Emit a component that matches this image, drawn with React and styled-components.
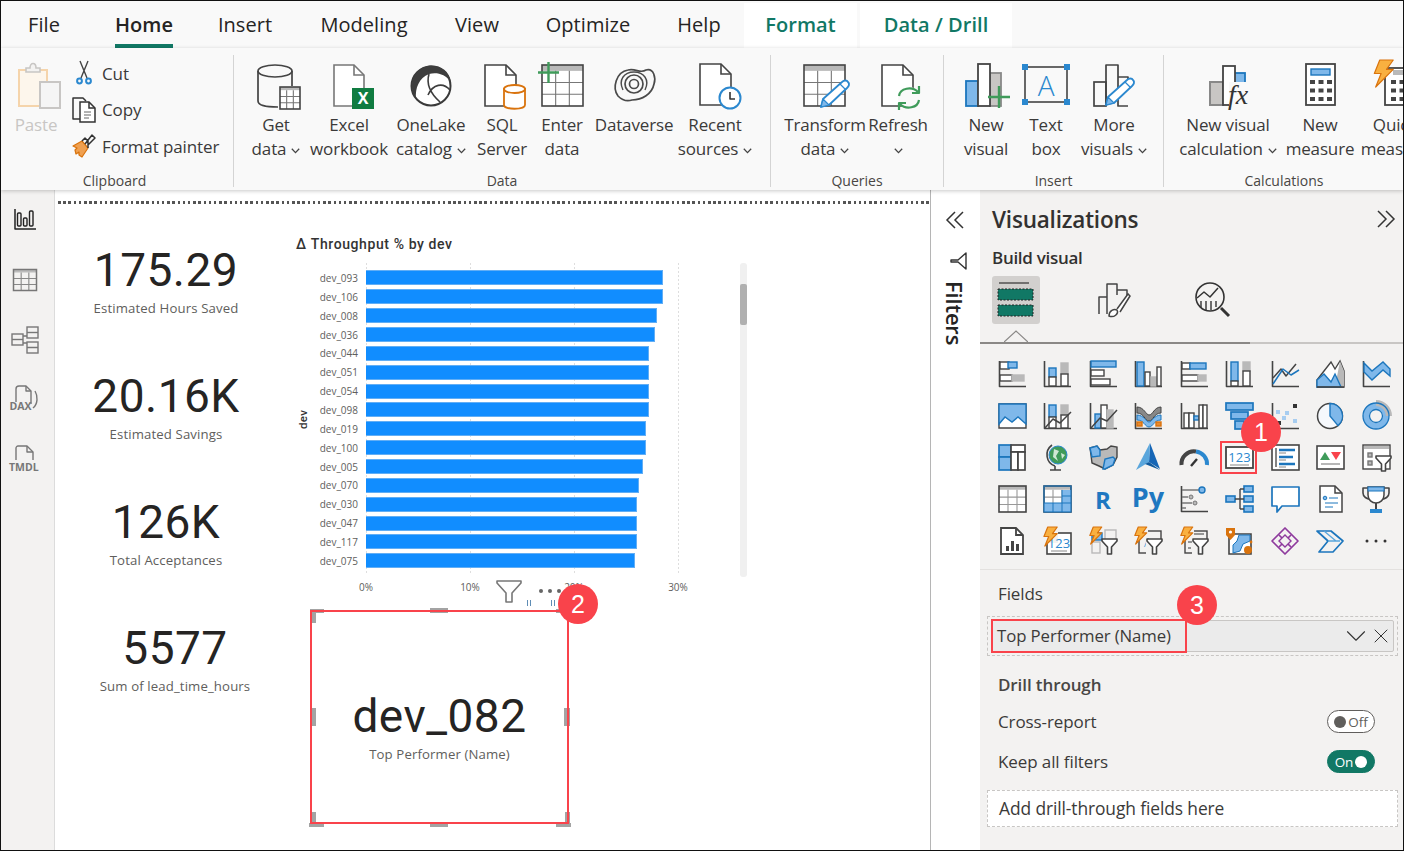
import styled, { createGlobalStyle } from "styled-components";
import { ChevronDown, X } from "lucide-react";

const D = "#444";
const B = "#1c76bd";
const L = "#7fb8ea";
const G = "#b9b9b9";
const W = "#fff";
const GREEN = "#117865";
const RED = "#f9434b";

const GlobalStyle = createGlobalStyle`
  * { box-sizing: border-box; }
  html, body { margin: 0; padding: 0; background: #fff; }
  body { font-family: "Open Sans", "Noto Sans", sans-serif; color: #3b3a39; }
`;

const Frame = styled.div`
  width: 1404px;
  height: 851px;
  border: 1px solid #111;
  display: flex;
  flex-direction: column;
  overflow: hidden;
  background: #fff;
`;

/* ---------- tabs + ribbon ---------- */
const Tabs = styled.nav`
  display: flex;
  height: 47px;
  background: #f9f9f9;
  padding-top: 2px;
`;
const Tab = styled.div`
  position: relative;
  width: ${(p) => p.$w}px;
  margin-left: ${(p) => p.$ml || 0}px;
  text-align: center;
  font-size: 20px;
  line-height: 44px;
  letter-spacing: 0.05px;
  color: ${(p) => (p.$context ? GREEN : "#252423")};
  font-weight: ${(p) => (p.$context || p.$active ? 600 : 400)};
  background: ${(p) => (p.$context ? "#fff" : "transparent")};
  ${(p) =>
    p.$active &&
    `&::after { content: ""; position: absolute; left: 28px; right: 28px; bottom: 0; height: 4px; background: ${GREEN}; }`}
`;
const Ribbon = styled.section`
  display: flex;
  height: 142px;
  padding-top: 7px;
  background: #f9f9f9;
  box-shadow: 0 1px 4px rgba(0, 0, 0, 0.22);
  position: relative;
  z-index: 2;
  overflow: hidden;
  flex: none;
`;
const Group = styled.div`
  width: ${(p) => p.$w}px;
  height: 132px;
  flex: none;
  display: flex;
  flex-direction: column;
  border-right: ${(p) => (p.$last ? "none" : "1px solid #d4d4d4")};
`;
const GroupBody = styled.div`
  display: flex;
  flex: none;
  height: 117px;
  padding-left: ${(p) => p.$pl || 0}px;
`;
const GroupLabel = styled.div`
  text-align: center;
  font-size: 14px;
  line-height: 18px;
  color: #484644;
  padding-right: ${(p) => p.$pr || 0}px;
`;
const Item = styled.div`
  width: ${(p) => p.$w}px;
  flex: none;
  display: flex;
  flex-direction: column;
  align-items: center;
  padding-top: 5px;
  font-size: 17px;
  line-height: 24px;
  letter-spacing: -0.15px;
  white-space: nowrap;
  color: ${(p) => (p.$disabled ? "#c8c6c4" : "#3b3a39")};
  & > div:first-of-type {
    margin-top: 1px;
  }
`;
const BigSvg = styled.svg`
  width: 48px;
  height: 52px;
  flex: none;
  overflow: visible;
`;
const Caret = styled.svg`
  width: 9px;
  height: 6px;
  margin-left: ${(p) => (p.$alone ? 0 : 5)}px;
  vertical-align: 1px;
`;
const SmallCol = styled.div`
  display: flex;
  flex-direction: column;
  padding-left: 12px;
`;
const SmallRow = styled.div`
  height: 36.5px;
  display: flex;
  align-items: center;
  gap: 6px;
  font-size: 17px;
  letter-spacing: -0.1px;
  white-space: nowrap;
`;
const SmallSvg = styled.svg`
  width: 24px;
  height: 26px;
  flex: none;
`;

/* ---------- body ---------- */
const Body = styled.main`
  flex: 1;
  display: flex;
  min-height: 0;
`;
const Rail = styled.aside`
  width: 54px;
  flex: none;
  background: #f3f2f1;
  border-right: 1px solid #dcdcdc;
  padding-right: 5px;
  display: flex;
  flex-direction: column;
  align-items: center;
`;
const RailCell = styled.div`
  height: 60px;
  display: flex;
  align-items: center;
  justify-content: center;
`;
const RailSvg = styled.svg`
  width: 30px;
  height: 30px;
  overflow: visible;
`;
const Canvas = styled.div`
  width: 875px;
  flex: none;
  padding-top: 11px;
`;
const DottedRule = styled.div`
  height: 3px;
  margin-left: 3px;
  background: repeating-linear-gradient(90deg, #555 0 2.5px, transparent 2.5px 5.2px);
`;
const Report = styled.div`
  display: flex;
`;
const KpiColumn = styled.div`
  width: 222px;
  flex: none;
  padding-top: 41px;
`;
const Kpi = styled.div`
  height: 126px;
  display: flex;
  flex-direction: column;
  align-items: center;
  padding-left: ${(p) => p.$shift || 0}px;
`;
const KpiValue = styled.div`
  font-family: Roboto, sans-serif;
  font-size: 46px;
  line-height: 50px;
  letter-spacing: 0.5px;
  color: #252423;
`;
const KpiLabel = styled.div`
  margin-top: 3px;
  font-size: 13.2px;
  line-height: 20px;
  color: #605e5c;
  letter-spacing: 0.12px;
`;
const ChartColumn = styled.div`
  margin-left: 19px;
  padding-top: 30px;
  width: 460px;
`;
const ChartTitle = styled.div`
  font-family: Roboto, sans-serif;
  font-weight: 500;
  font-size: 14px;
  line-height: 20px;
  letter-spacing: 0.6px;
  color: #333;
  margin-bottom: 9px;
`;
const ChartBody = styled.div`
  display: flex;
  height: 314px;
`;
const AxisTitle = styled.div`
  width: 20px;
  flex: none;
  display: flex;
  align-items: center;
  justify-content: center;
  padding-left: 6px;
  padding-top: 2px;
  writing-mode: vertical-rl;
  transform: rotate(180deg);
  font-family: Roboto, sans-serif;
  font-weight: 500;
  font-size: 11.5px;
  letter-spacing: 0.3px;
  color: #333;
`;
const BarList = styled.div`
  width: 420px;
  height: 312px;
  flex: none;
  padding-top: 5.5px;
  background-image: linear-gradient(#dedede 50%, transparent 50%), linear-gradient(#dedede 50%, transparent 50%),
    linear-gradient(#dedede 50%, transparent 50%), linear-gradient(#dedede 50%, transparent 50%);
  background-size: 1px 4px;
  background-repeat: repeat-y;
  background-position: 50px 0, 154px 0, 258px 0, 362px 0;
`;
const BarRow = styled.div`
  height: 18.87px;
  display: grid;
  grid-template-columns: 42px 1fr;
  column-gap: 8px;
  align-items: center;
`;
const BarName = styled.div`
  font-size: 10px;
  line-height: 12px;
  text-align: right;
  color: #605e5c;
  white-space: nowrap;
`;
const Bar = styled.div`
  height: 15px;
  background: #118dff;
  border: 1px solid #62aef5;
  border-left: none;
`;
const Scrollbar = styled.div`
  width: 7px;
  margin-left: 4px;
  background: #f0f0f0;
  border-radius: 3px;
  padding-top: 21px;
`;
const ScrollThumb = styled.div`
  height: 41px;
  background: #b0b0b0;
  border-radius: 2px;
`;
const AxisRow = styled.div`
  display: flex;
  margin: 2px 0 0 18px;
`;
const AxisTick = styled.div`
  width: 104px;
  text-align: center;
  font-size: 10px;
  line-height: 16px;
  color: #605e5c;
`;
const SelectedCard = styled.div`
  position: relative;
  width: 259px;
  height: 214px;
  margin: 15px 0 0 14px;
  padding-top: 20px;
  display: flex;
  flex-direction: column;
  align-items: center;
  justify-content: center;
  &::after {
    content: "";
    position: absolute;
    inset: 0;
    border: 2px solid ${RED};
  }
`;
const Handle = styled.span`
  position: absolute;
  left: ${(p) => p.$l}px;
  top: ${(p) => p.$t}px;
  width: ${(p) => p.$w}px;
  height: ${(p) => p.$h}px;
  background: #a3a3a3;
`;
const ToolbarMark = styled.span`
  position: absolute;
  left: ${(p) => p.$l}px;
  top: -10px;
  width: 4px;
  height: 6px;
  border-left: 1px solid #5f8db5;
  border-right: 1px solid #5f8db5;
`;
const FilterGlyph = styled.svg`
  position: absolute;
  left: 186px;
  top: -30px;
  width: 26px;
  height: 24px;
`;
const MoreDots = styled.span`
  position: absolute;
  left: 229px;
  top: -21px;
  display: flex;
  gap: 5px;
  & i {
    width: 4px;
    height: 4px;
    border-radius: 50%;
    background: #666;
  }
`;
const Badge = styled.div`
  position: absolute;
  left: ${(p) => p.$l}px;
  top: ${(p) => p.$t}px;
  width: 40px;
  height: 40px;
  border-radius: 50%;
  background: ${RED};
  color: #fff;
  font-family: "Liberation Sans", sans-serif;
  font-size: 25px;
  line-height: 40px;
  text-align: center;
  z-index: 3;
`;

/* ---------- filters pane ---------- */
const FilterPane = styled.div`
  width: 50px;
  flex: none;
  border-left: 1px solid #b5b5b5;
  display: flex;
  flex-direction: column;
  align-items: center;
  padding: 19px 2px 0 0;
`;
const PaneChevron = styled.svg`
  width: 22px;
  height: 22px;
  flex: none;
`;
const FunnelSide = styled.svg`
  width: 20px;
  height: 20px;
  margin-top: 20px;
  margin-left: 6px;
`;
const FilterText = styled.div`
  writing-mode: vertical-rl;
  font-size: 22px;
  line-height: 22px;
  font-weight: 600;
  letter-spacing: -0.2px;
  margin-top: 10px;
  color: #252423;
`;

/* ---------- visualizations pane ---------- */
const VizPane = styled.aside`
  flex: 1;
  background: #f3f2f1;
  padding-top: 14px;
  min-width: 0;
`;
const VizHead = styled.div`
  display: flex;
  align-items: center;
  justify-content: space-between;
  height: 30px;
  padding: 0 6px 0 12px;
`;
const VizTitle = styled.h2`
  margin: 0;
  font-size: 22.5px;
  font-weight: 600;
  letter-spacing: -0.2px;
  color: #323130;
`;
const BuildLabel = styled.div`
  margin: 14px 0 0 12px;
  font-size: 17px;
  line-height: 20px;
  font-weight: 600;
  letter-spacing: -0.3px;
  color: #323130;
`;
const BuildTabs = styled.div`
  display: flex;
  gap: 50px;
  margin: 8px 0 0 12px;
`;
const BuildTab = styled.div`
  width: 48px;
  height: 48px;
  border-radius: 3px;
  background: ${(p) => (p.$active ? "#d2d0ce" : "transparent")};
  display: flex;
  align-items: center;
  justify-content: center;
`;
const BuildSvg = styled.svg`
  width: 40px;
  height: 40px;
`;
const TabRule = styled.div`
  position: relative;
  height: 2px;
  margin-top: 18px;
  background: linear-gradient(90deg, #8a8886 0 270px, #c8c6c4 270px);
`;
const Notch = styled.svg`
  position: absolute;
  left: 24px;
  top: -12px;
  width: 24px;
  height: 13px;
`;
const VisualGrid = styled.div`
  position: relative;
  display: grid;
  grid-template-columns: repeat(9, 45.5px);
  grid-auto-rows: 41.75px;
  margin: 9px 0 0 9px;
`;
const VisualCell = styled.div`
  position: relative;
  display: flex;
  align-items: center;
  justify-content: center;
  ${(p) =>
    p.$selected &&
    `&::after { content: ""; position: absolute; left: 3.5px; top: 4.5px; width: 33px; height: 29px; border: 2px solid ${RED}; }`}
`;
const VisualSvg = styled.svg`
  width: 28px;
  height: 28px;
  overflow: visible;
`;
const PaneRule = styled.div`
  height: 1px;
  margin-top: 7px;
  background: #e3e1df;
`;
const SectionLabel = styled.div`
  margin: ${(p) => p.$mt}px 0 0 18px;
  font-size: 17px;
  line-height: 22px;
  letter-spacing: -0.1px;
  font-weight: ${(p) => (p.$bold ? 600 : 400)};
  color: ${(p) => (p.$bold ? "#484644" : "#3b3a39")};
`;
const FieldWell = styled.div`
  position: relative;
  margin: 11px 5px 0 7px;
  height: 40px;
  padding: 3px;
  border: 1px dashed #c8c6c4;
`;
const FieldPill = styled.div`
  height: 32px;
  display: flex;
  align-items: center;
  background: #ebebeb;
  border: 1px solid #c8c6c4;
  border-radius: 2px;
  font-size: 16.8px;
  letter-spacing: -0.1px;
  color: #3b3a39;
`;
const FieldName = styled.div`
  flex: none;
  width: 196px;
  height: 34px;
  margin: 0 auto 0 -1px;
  padding-left: 4px;
  line-height: 30px;
  border: 2px solid ${RED};
`;
const FieldChevron = styled(ChevronDown)`
  flex: none;
  margin-right: -4px;
`;
const FieldRemove = styled(X)`
  flex: none;
`;
const ToggleRow = styled.div`
  display: flex;
  align-items: center;
  justify-content: space-between;
  height: 22px;
  margin: ${(p) => p.$mt}px 28px 0 18px;
  font-size: 17px;
  letter-spacing: -0.1px;
`;
const Toggle = styled.div`
  width: 48px;
  height: 23px;
  border-radius: 12px;
  display: flex;
  align-items: center;
  justify-content: center;
  gap: 2px;
  font-size: 13.5px;
  flex-direction: ${(p) => (p.$on ? "row-reverse" : "row")};
  color: ${(p) => (p.$on ? "#fff" : "#605e5c")};
  background: ${(p) => (p.$on ? GREEN : "#fff")};
  border: 1px solid ${(p) => (p.$on ? GREEN : "#605e5c")};
  & i {
    width: 12px;
    height: 12px;
    border-radius: 50%;
    background: ${(p) => (p.$on ? "#fff" : "#605e5c")};
  }
`;
const DropBox = styled.div`
  margin: 17px 5px 0 7px;
  height: 37px;
  padding-left: 11px;
  background: #fff;
  border: 1px dashed #c8c6c4;
  font-size: 17.4px;
  line-height: 35px;
  letter-spacing: -0.1px;
  color: #3b3a39;
`;

/* ---------- drawing helpers ---------- */
const Bx = ({ x, y, w, h, f = W, s = D, sw = 1.4, r = 0 }) => (
  <rect x={x} y={y} width={w} height={h} fill={f} stroke={s} strokeWidth={sw} rx={r} />
);
const Ln = ({ d, s = D, sw = 1.4, f = "none", cap = "butt" }) => (
  <path d={d} stroke={s} strokeWidth={sw} fill={f} strokeLinecap={cap} strokeLinejoin="round" />
);
const Axis = () => <Ln d="M1.5 1V26.5H28" sw={1.6} />;

const Tbl = ({ x, y, w, h, cols, rows, head = G, s = D, fill = W, inner = "#777", sw = 1.6 }) => {
  const lines = [];
  const headH = head ? h / (rows + 0.5) / 2 : 0;
  for (let i = 1; i < cols; i++) {
    const px = x + (w * i) / cols;
    lines.push(`M${px} ${y + headH}V${y + h}`);
  }
  for (let i = 1; i < rows; i++) {
    const py = y + headH + ((h - headH) * i) / rows;
    lines.push(`M${x} ${py}H${x + w}`);
  }
  return (
    <g>
      <rect x={x} y={y} width={w} height={h} fill={fill} />
      {head && <rect x={x} y={y} width={w} height={headH} fill={head} />}
      <path d={lines.join("")} stroke={inner} strokeWidth={1.1} fill="none" />
      <rect x={x} y={y} width={w} height={h} fill="none" stroke={s} strokeWidth={sw} />
    </g>
  );
};
const Doc = ({ x, y, w, h, f = 9, s = D, sw = 1.6, fill = W }) => (
  <g>
    <path
      d={`M${x} ${y}H${x + w - f}L${x + w} ${y + f}V${y + h}H${x}Z`}
      fill={fill}
      stroke={s}
      strokeWidth={sw}
    />
    <path d={`M${x + w - f} ${y}V${y + f}H${x + w}`} fill="none" stroke={s} strokeWidth={sw} />
  </g>
);
const Bolt = ({ x, y, k = 1 }) => (
  <path
    transform={`translate(${x} ${y}) scale(${k})`}
    d="M5 0H15L10 7H15L2 20L6 10H1Z"
    fill="#f9b040"
    stroke="#d9730d"
    strokeWidth={1.2 / k}
    strokeLinejoin="round"
  />
);
const Plus = ({ x, y, size }) => (
  <Ln d={`M${x + size / 2} ${y}V${y + size}M${x} ${y + size / 2}H${x + size}`} s="#3f9b5a" sw={2.4} />
);
const Pencil = ({ x, y }) => (
  <g transform={`translate(${x} ${y})`}>
    <path d="M0 28L2 20L21 3C23 1 26 1 27 3C29 5 28 7 26 9L8 26Z" fill="#fff" stroke="#2b88cf" strokeWidth={1.8} strokeLinejoin="round" />
    <path d="M0 28L2 20L8 26Z" fill={L} stroke="#2b88cf" strokeWidth={1.2} strokeLinejoin="round" />
    <path d="M19 5L25 11" fill="none" stroke="#2b88cf" strokeWidth={1.2} />
  </g>
);
const FunnelMini = ({ x, y, k = 1 }) => (
  <path
    transform={`translate(${x} ${y}) scale(${k})`}
    d="M0 0H15V2L9.5 8V15H5.5V8L0 2Z"
    fill="#fff"
    stroke={D}
    strokeWidth={1.6 / k}
    strokeLinejoin="round"
  />
);
const SvgLabel = styled.text`
  font-family: ${(p) => p.$family || '"Open Sans", sans-serif'};
  font-size: ${(p) => p.$size}px;
  font-weight: ${(p) => p.$weight || 400};
  font-style: ${(p) => p.$style || "normal"};
  fill: ${(p) => p.$fill};
`;

const Big = ({ children }) => <BigSvg viewBox="0 0 48 52">{children}</BigSvg>;
const Chev = ({ alone }) => (
  <Caret viewBox="0 0 9 6" $alone={alone}>
    <path d="M0.8 0.8L4.5 4.6L8.2 0.8" fill="none" stroke="#444" strokeWidth="1.3" />
  </Caret>
);

/* ---------- ribbon icons ---------- */
const PasteIcon = () => (
  <Big>
    <Bx x={7} y={10} w={28} h={36} f="#fdf6ec" s="#f5d4ab" sw={2} />
    <path d="M14 12V8H18C18 2 24 2 24 8H28V12Z" fill="#f3f2f1" stroke="#c8c6c4" strokeWidth="1.6" />
    <Bx x={28} y={22} w={20} h={26} f="#f5f5f5" s="#c8c6c4" sw={2} />
  </Big>
);
const CutIcon = () => (
  <SmallSvg viewBox="0 0 24 26">
    <Ln d="M8 1L15 18M16 1L9 18" s="#444" sw={1.4} />
    <circle cx="7.5" cy="21" r="2.4" fill="none" stroke="#2b88cf" strokeWidth="2" />
    <circle cx="16.5" cy="21" r="2.4" fill="none" stroke="#2b88cf" strokeWidth="2" />
  </SmallSvg>
);
const CopyIcon = () => (
  <SmallSvg viewBox="0 0 24 26">
    <Ln d="M9 22H1V1H11L14 4" s="#333" sw={1.5} />
    <Doc x={8} y={5} w={15} h={20} f={6} s="#333" sw={1.5} />
    <Ln d="M12 15H19M12 18H19M12 21H17" s="#666" sw={1} />
  </SmallSvg>
);
const PainterIcon = () => (
  <SmallSvg viewBox="0 0 24 26">
    <path d="M1 13L10 8L16 15L10 24L7 22L7 19L4 21L3 17L5 15Z" fill="#f0a050" stroke="#d9730d" strokeWidth="1.2" strokeLinejoin="round" />
    <Ln d="M10 8L13 5L16 8L16 15M13 11L20 2L23 5L16 12" s="#333" sw={1.5} />
  </SmallSvg>
);
const GetDataIcon = () => (
  <Big>
    <ellipse cx="23" cy="11" rx="17" ry="6" fill="none" stroke={D} strokeWidth="1.7" />
    <Ln d="M6 11V41C6 45 14 47 26 47M40 11V26" sw={1.7} />
    <Tbl x={28} y={27} w={20} h={22} cols={3} rows={3} />
  </Big>
);
const ExcelIcon = () => (
  <Big>
    <Doc x={9} y={5} w={30} h={41} f={10} s="#777" />
    <rect x={27} y={28} width={22} height={21} fill="#107c41" />
    <SvgLabel x={38} y={44} textAnchor="middle" $size={16} $weight={700} $fill="#fff">X</SvgLabel>
  </Big>
);
const OneLakeIcon = () => (
  <Big>
    <circle cx="24" cy="26" r="19.5" fill="#fff" stroke="#3a3a3a" strokeWidth="2" />
    <path d="M9 39C1 28 5 10 20 6C32 4 42 10 44 22C38 14 30 12 22 14C12 18 8 28 9 39Z" fill="#3d3d3d" />
    <Ln d="M22 14C19 24 24 34 33 42M21 35C26 24 36 22 43 30" s="#3d3d3d" sw={1.6} />
  </Big>
);
const SqlIcon = () => (
  <Big>
    <Doc x={7} y={5} w={31} h={41} f={10} />
    <path d="M26 29V45C26 50 47 50 47 45V29Z" fill="#fff" stroke="#d9730d" strokeWidth="1.8" />
    <ellipse cx="36.5" cy="29" rx="10.5" ry="4" fill="#fff" stroke="#d9730d" strokeWidth="1.8" />
  </Big>
);
const EnterDataIcon = () => (
  <Big>
    <Tbl x={4} y={5} w={41} h={41} cols={3} rows={3} />
    <Plus x={0} y={2} size={21} />
  </Big>
);
const DataverseIcon = () => (
  <Big>
    <Ln d="M8 36C2 28 6 12 18 10C26 8 30 14 36 10C44 8 46 18 44 24C42 34 32 40 22 40C16 42 12 40 8 36Z" s="#4a4a4a" sw={1.7} />
    <circle cx="24" cy="24" r="9" fill="none" stroke="#4a4a4a" strokeWidth="1.7" />
    <circle cx="24" cy="24" r="4.5" fill="none" stroke="#4a4a4a" strokeWidth="1.7" />
    <Ln d="M13 30C8 20 14 12 24 12C34 12 40 20 35 30" s="#4a4a4a" sw={1.4} />
  </Big>
);
const RecentIcon = () => (
  <Big>
    <Doc x={9} y={4} w={31} h={41} f={10} />
    <circle cx="39" cy="38" r="10.5" fill="#fff" stroke="#2b88cf" strokeWidth="2" />
    <Ln d="M39 32V39H44" s="#333" sw={1.6} />
  </Big>
);
const TransformIcon = () => (
  <Big>
    <Tbl x={3} y={5} w={41} h={41} cols={3} rows={3} />
    <Pencil x={20} y={19} />
  </Big>
);
const RefreshIcon = () => (
  <Big>
    <Doc x={8} y={5} w={31} h={41} f={10} />
    <circle cx="35" cy="38" r="11" fill="#f9f9f9" />
    <Ln d="M25 36C26 28 38 26 44 32M45 40C44 48 32 50 26 44" s="#3f9b5a" sw={2.2} />
    <Ln d="M45 26V33H38M25 50V43H32" s="#3f9b5a" sw={2.2} />
  </Big>
);
const NewVisualIcon = () => (
  <Big>
    <Bx x={4} y={21} w={12} h={25} f={L} s={B} sw={1.8} />
    <Bx x={28} y={13} w={11} h={33} f="#c8c6c4" s="#888" sw={1.8} />
    <Bx x={16} y={4} w={12} h={42} sw={1.8} />
    <Plus x={26} y={26} size={22} />
  </Big>
);
const TextBoxIcon = () => (
  <Big>
    <Bx x={3} y={7} w={42} h={35} f="none" sw={1.6} />
    <SvgLabel x={24} y={36} textAnchor="middle" $size={28} $weight={300} $fill="#2b88cf">A</SvgLabel>
    {[[0, 4], [42, 4], [0, 39], [42, 39]].map(([x, y]) => (
      <rect key={`${x}-${y}`} x={x} y={y} width={6} height={6} fill="#2b88cf" />
    ))}
  </Big>
);
const MoreVisualsIcon = () => (
  <Big>
    <Bx x={4} y={22} w={12} h={24} sw={1.7} f="none" />
    <Ln d="M28 17H38V24M16 46V5H28V46H38" sw={1.7} />
    <Pencil x={16} y={17} />
  </Big>
);
const VisualCalcIcon = () => (
  <Big>
    <Bx x={6} y={22} w={13} h={23} f="#c8c6c4" s="#888" sw={2} />
    <Bx x={29} y={13} w={12} h={25} f={L} s={B} sw={1.8} />
    <Bx x={19} y={6} w={12} h={39} sw={1.8} />
    <rect x={25} y={22} width={22} height={26} fill="#f9f9f9" />
    <SvgLabel x={24} y={44} $family='"Liberation Serif", serif' $size={28} $style="italic" $fill="#333">fx</SvgLabel>
  </Big>
);
const KeyPad = ({ x, y }) => (
  <g fill="#444">
    {[0, 1, 2].map((r) =>
      [0, 1, 2].map((c) => <rect key={`${r}${c}`} x={x + c * 8.5} y={y + r * 8.5} width={5} height={4} />)
    )}
  </g>
);
const MeasureIcon = () => (
  <Big>
    <Bx x={10} y={4} w={29} h={41} f="#fff" s="#444" sw={1.8} />
    <Bx x={15} y={9} w={19} h={6} f={L} s={B} sw={1.4} />
    <KeyPad x={14} y={20} />
  </Big>
);
const QuickIcon = () => (
  <Big>
    <Bx x={14} y={8} w={40} h={37} f="#fff" s="#444" sw={1.8} />
    <rect x={22} y={10} width={28} height={5} fill={G} />
    <KeyPad x={20} y={20} />
    <Bolt x={2} y={0} k={1.35} />
  </Big>
);

/* ---------- rail icons ---------- */
const ReportNavIcon = () => (
  <RailSvg viewBox="0 0 30 30">
    <Ln d="M5 4V24H26" s="#222" sw={1.5} />
    <Bx x={7.5} y={8} w={3.5} h={13} f="none" s="#222" sw={1.4} r={1} />
    <Bx x={13.5} y={13} w={3.5} h={8} f="none" s="#222" sw={1.4} r={1} />
    <Bx x={19.5} y={6} w={3.5} h={15} f="none" s="#222" sw={1.4} r={1} />
  </RailSvg>
);
const TableNavIcon = () => (
  <RailSvg viewBox="0 0 30 30">
    <Tbl x={3.5} y={4.5} w={23} h={21} cols={3} rows={3} s="#777" inner="#888" fill="none" head="#bbb" sw={1.5} />
  </RailSvg>
);
const ModelNavIcon = () => (
  <RailSvg viewBox="0 0 30 30">
    <Bx x={2} y={9} w={11} h={11} f="none" s="#777" />
    <Ln d="M2 14.5H13" s="#777" />
    <Bx x={17} y={2} w={11} h={11} f="none" s="#777" />
    <Ln d="M17 7.5H28" s="#777" />
    <Bx x={17} y={17} w={11} h={11} f="none" s="#777" />
    <Ln d="M17 22.5H28M13 11H17M13 18H17" s="#777" />
  </RailSvg>
);
const DaxNavIcon = () => (
  <RailSvg viewBox="0 0 30 30">
    <Ln d="M6 17V4C6 2 7 1 9 1H16L21 6V19" s="#777" />
    <Ln d="M16 1V6H21M25 6C28 11 28 19 23 23" s="#777" />
    <SvgLabel x={-0.5} y={25} $size={10.5} $weight={700} $fill="#777">DAX</SvgLabel>
  </RailSvg>
);
const TmdlNavIcon = () => (
  <RailSvg viewBox="0 0 30 30">
    <Ln d="M6 15V3C6 2 7 1 8 1H17L23 7V15" s="#777" />
    <Ln d="M17 1V7H23" s="#777" />
    <SvgLabel x={-1} y={26} $size={10.5} $weight={700} $fill="#777">TMDL</SvgLabel>
  </RailSvg>
);

/* ---------- visual gallery ---------- */
const Dot = ({ x, y, s = 4, f = "#a7cdf0" }) => <rect x={x} y={y} width={s} height={s} fill={f} />;

const gallery = [
  <><Axis /><Bx x={2} y={2} w={9} h={7} /><Bx x={10} y={2} w={9} h={6} f={L} s={B} /><Bx x={2} y={15} w={12} h={6} /><Bx x={14} y={15} w={12} h={6} f={G} s={G} /></>,
  <><Axis /><Bx x={6} y={8} w={7} h={9} f={L} s={B} /><Bx x={6} y={17} w={7} h={9} /><Bx x={18} y={3} w={7} h={11} f={G} s={G} /><Bx x={18} y={14} w={7} h={12} /></>,
  <><Axis /><Bx x={2} y={1} w={25} h={6} f={L} s={B} /><Bx x={2} y={10} w={13} h={6} /><Bx x={2} y={19} w={19} h={6} /></>,
  <><Axis /><Bx x={3} y={2} w={7} h={24} f={L} s={B} /><Bx x={11} y={12} w={5} h={14} /><Bx x={17} y={17} w={5} h={9} f={G} s={G} /><Bx x={23} y={7} w={4} h={19} /></>,
  <><Axis /><Bx x={2} y={3} w={8} h={6} /><Bx x={10} y={3} w={16} h={6} f={L} s={B} /><Bx x={2} y={15} w={16} h={6} /><Bx x={18} y={15} w={8} h={6} f={G} s={G} /></>,
  <><Axis /><Bx x={6} y={2} w={7} h={19} f={L} s={B} /><Bx x={6} y={21} w={7} h={5} /><Bx x={18} y={2} w={7} h={9} f={G} s={G} /><Bx x={18} y={11} w={7} h={15} /></>,
  <><Axis /><Ln d="M2 18L10 9L15 16L25 4" sw={1.5} /><Ln d="M2 24L12 9L20 15L28 10" s={B} sw={1.5} /></>,
  <><path d="M1 20L15 2L19 9L24 1L28 11V27H1Z" fill={W} stroke={D} strokeWidth="1.4" /><path d="M24 1L28 11V27H19Z" fill={G} /><path d="M1 27V20L8 14L15 22L19 14L25 27Z" fill={L} stroke={B} strokeWidth="1.4" /><Ln d="M1 27H28" sw={1.6} /></>,
  <><Axis /><path d="M2 3L10 11L21 2L28 9V16L21 10L10 20L2 12Z" fill={L} stroke={B} strokeWidth="1.4" /></>,
  <><path d="M1 2H28V26H1Z" fill={W} stroke={D} strokeWidth="1.4" /><path d="M1 2H28V22L20 15L14 20L7 15L1 22Z" fill={L} stroke={B} strokeWidth="1.4" /></>,
  <><Axis /><Bx x={6} y={3} w={7} h={12} f={L} s={B} /><Bx x={6} y={15} w={7} h={11} /><Bx x={18} y={3} w={7} h={10} f={G} s={G} /><Bx x={18} y={13} w={7} h={13} /><Ln d="M2 26L10 17L17 21L28 10" sw={1.5} /></>,
  <><Axis /><Bx x={6} y={12} w={6} h={14} f={L} s={B} /><Bx x={12} y={3} w={6} h={23} /><Bx x={18} y={8} w={6} h={18} f={G} s={G} /><Ln d="M2 26L11 16L18 19L28 8" sw={1.5} /></>,
  <><Axis /><path d="M3 5C10 5 12 13 15 13C19 13 20 5 27 5V11C20 11 19 19 15 19C11 19 10 11 3 11Z" fill="#888" stroke={D} /><path d="M3 13C10 13 12 20 15 20C18 20 20 13 27 13V18C20 18 19 25 15 25C11 25 10 18 3 18Z" fill={L} stroke={B} /><Bx x={3} y={20} w={5} h={4} f="#e88a2f" s="#d9730d" /><Bx x={22} y={20} w={5} h={4} f="#e88a2f" s="#d9730d" /></>,
  <><Axis /><Bx x={4} y={11} w={5} h={15} /><Bx x={9} y={11} w={5} h={15} /><Bx x={14} y={14} w={5} h={4} f={L} s={B} /><Bx x={19} y={3} w={4} h={23} /><Bx x={23} y={3} w={4} h={23} /></>,
  <><Bx x={1} y={1} w={27} h={7} f={L} s={B} sw={1.7} /><Bx x={6} y={10} w={17} h={7} f={L} s={B} sw={1.7} /><Bx x={10} y={19} w={9} h={8} f={L} s={B} sw={1.7} /></>,
  <><Axis /><Dot x={5} y={8} /><Dot x={11} y={14} /><Dot x={14} y={9} /><Dot x={22} y={17} /><Dot x={22} y={2} f="#333" /><Dot x={6} y={19} f="#333" /></>,
  <><circle cx="14" cy="14" r="12.5" fill="#f5f8fc" stroke={D} strokeWidth="1.5" /><path d="M14 1.5A12.5 12.5 0 0 1 22 23.6L14 14Z" fill={L} stroke={B} strokeWidth="1.4" /></>,
  <><circle cx="14" cy="14" r="10" fill="none" stroke={L} strokeWidth="6" /><path d="M14 1A13 13 0 0 1 27 14" fill="none" stroke={G} strokeWidth="6" /><circle cx="14" cy="14" r="13" fill="none" stroke={B} strokeWidth="1.3" /><circle cx="14" cy="14" r="6.5" fill="#f3f2f1" stroke={B} strokeWidth="1.3" /></>,
  <><Bx x={1} y={2} w={12} h={12} f={L} s={B} sw={1.7} /><Bx x={1} y={14} w={12} h={13} f={L} s={B} sw={1.7} /><Bx x={13} y={2} w={14} h={7} sw={1.7} /><Bx x={13} y={9} w={7} h={18} sw={1.7} /><Bx x={20} y={9} w={7} h={18} sw={1.7} /></>,
  <><circle cx="15" cy="12" r="9" fill="#3f9b5a" stroke="#2b88cf" strokeWidth="1" /><path d="M11 6L16 8L13 13L15 18L10 14ZM18 10L22 12L19 16Z" fill="#cfe8d5" /><Ln d="M9 2C1 8 3 20 12 23M12 23V27M7 27H18" sw={1.6} /></>,
  <><path d="M1 5L8 3L11 7L18 6L22 3L28 4V14L24 22L16 26L10 23L3 20L2 12Z" fill={G} stroke={D} strokeWidth="1.4" /><path d="M1 5L8 3L11 7L11 13L3 14Z" fill={L} stroke={B} strokeWidth="1.4" /><path d="M14 26L16 16L24 14L26 16L24 22L16 26Z" fill={L} stroke={B} strokeWidth="1.4" /></>,
  <><path d="M16 0L26 26L15 19Z" fill="#1565b5" /><path d="M16 0L15 19L2 27Z" fill="#5aa6dc" /><path d="M15 19L26 27L11 21Z" fill="#0f5a9e" /></>,
  <><path d="M1.5 22A12.5 12.5 0 0 1 16 8.5" fill="none" stroke={D} strokeWidth="4" /><path d="M16 8.5A12.5 12.5 0 0 1 27 22" fill="none" stroke="#2b88cf" strokeWidth="4" /><Ln d="M11 23L17 16" s="#333" sw={2.4} /></>,
  <><Bx x={1} y={4} w={27} h={21} sw={1.8} /><SvgLabel x={14.5} y={19} textAnchor="middle" $size={13} $fill="#2b88cf">123</SvgLabel><Ln d="M5 22H24" s="#888" sw={1} /></>,
  <><Bx x={1} y={2} w={27} h={25} sw={1.6} /><Ln d="M5 5V24" s="#777" sw={1.8} /><Ln d="M8 7H24M8 14H22M8 21H24" s={B} sw={2.4} /><Ln d="M8 10H15M8 17H15M8 24H15" s="#888" sw={1} /></>,
  <><Bx x={1} y={3} w={27} h={23} sw={1.6} /><path d="M9 9L14 17H4Z" fill="#3f9b5a" /><path d="M15 9H25L20 17Z" fill={RED} /><Ln d="M5 21H24" s="#888" sw={1.2} /></>,
  <><Bx x={1} y={2} w={27} h={24} sw={1.4} /><rect x={2} y={3} width={25} height={3} fill={G} /><Bx x={6} y={10} w={4} h={4} f={G} s="#777" /><Bx x={6} y={18} w={4} h={4} f={G} s="#777" /><FunnelMini x={14} y={13} /></>,
  <Tbl x={1} y={1} w={27} h={26} cols={3} rows={3} inner="#999" />,
  <><Tbl x={1} y={1} w={27} h={26} cols={3} rows={3} inner="#999" /><rect x={19} y={5} width={9} height={22} fill={L} /><rect x={1} y={18} width={27} height={9} fill={L} /><path d="M10 18V27M19 5V27M19 11H28M1 18H28" stroke={B} strokeWidth="1" /><rect x={1} y={1} width={27} height={26} fill="none" stroke={B} strokeWidth="1.2" /></>,
  <SvgLabel x={14} y={24} textAnchor="middle" $size={24} $weight={700} $fill="#1f78c1">R</SvgLabel>,
  <SvgLabel x={14} y={22} textAnchor="middle" $size={27} $weight={700} $fill="#1f78c1">Py</SvgLabel>,
  <><Axis /><Ln d="M2 5H19M2 12H8M2 18H12M2 23H6" s="#777" /><circle cx="22" cy="5" r="3" fill={L} stroke={B} strokeWidth="1.4" /><circle cx="11" cy="12" r="2" fill={G} stroke="#777" /><circle cx="15" cy="18" r="2" fill={G} stroke="#777" /></>,
  <><Bx x={1} y={11} w={9} h={6} f={L} s={B} sw={1.6} /><Bx x={19} y={1} w={9} h={6} f={L} s={B} sw={1.6} /><Bx x={19} y={11} w={9} h={6} f={L} s={B} sw={1.6} /><Bx x={19} y={21} w={9} h={6} f={L} s={B} sw={1.6} /><Ln d="M10 14H19M15 4V24M15 4H19M15 24H19" sw={1.4} /></>,
  <><path d="M1 2H28V21H11L6 27V21H1Z" fill={W} stroke={B} strokeWidth="1.7" strokeLinejoin="round" /></>,
  <><Doc x={4} y={1} w={22} h={26} f={7} sw={1.5} /><circle cx="9" cy="13" r="1.8" fill={L} stroke={B} /><Ln d="M13 13H22M9 18H22M9 22H17" s={B} sw={1} /></>,
  <><Ln d="M6 3H1V8C1 12 5 14 8 14M22 3H27V8C27 12 23 14 20 14" sw={1.6} /><path d="M6 2H22V10C22 15 18 18 14 18C10 18 6 15 6 10Z" fill={W} stroke={D} strokeWidth="1.5" /><rect x={6} y={2} width={16} height={4} fill={L} stroke={B} /><Ln d="M14 18V24" sw={2} /><rect x={8} y={24} width={12} height={4} fill="#2b88cf" /></>,
  <><Doc x={3} y={1} w={22} h={26} f={7} sw={1.8} /><rect x={8} y={19} width={3} height={5} fill="#444" /><rect x={13} y={14} width={3} height={10} fill="#444" /><rect x={18} y={17} width={3} height={7} fill="#444" /></>,
  <><Bx x={4} y={6} w={24} h={21} sw={1.6} /><rect x={0} y={2} width={15} height={14} fill="#f3f2f1" /><SvgLabel x={16} y={21} textAnchor="middle" $size={13} $fill="#2b88cf">123</SvgLabel><Ln d="M8 24H24" s="#888" sw={1} /><Bolt x={0} y={0} k={0.95} /></>,
  <><Bx x={3} y={15} w={8} h={11} f="none" s={G} /><Bx x={16} y={3} w={11} h={10} f="none" s={G} /><Bx x={3} y={6} w={10} h={7} f={L} s={B} /><Bolt x={0} y={0} k={0.85} /><FunnelMini x={13} y={12} /></>,
  <><Bx x={5} y={4} w={22} h={22} f="none" sw={1.4} /><rect x={0} y={0} width={14} height={12} fill="#f3f2f1" /><SvgLabel x={14} y={20} textAnchor="middle" $size={13} $weight={300} $fill="#2b88cf">A</SvgLabel><Bolt x={0} y={0} k={0.85} /><rect x={12} y={12} width={16} height={16} fill="#f3f2f1" /><FunnelMini x={13} y={12} /></>,
  <><Bx x={5} y={4} w={22} h={22} f="none" sw={1.4} /><rect x={0} y={0} width={14} height={12} fill="#f3f2f1" /><Ln d="M14 7H24M8 15H12M8 21H11" s="#777" /><Bolt x={0} y={0} k={0.85} /><rect x={12} y={12} width={16} height={16} fill="#f3f2f1" /><FunnelMini x={13} y={12} /></>,
  <><path d="M4 7H26V27H4Z" fill={W} stroke={D} strokeWidth="1.6" /><path d="M14 8H25V14L18 17L15 24L8 26V18L12 14Z" fill="#7fb8ea" stroke={B} /><path d="M1 1H10V8L5.5 13L1 8Z" fill="#d9730d" /><circle cx="5.5" cy="5" r="1.6" fill="#fff" /><circle cx="23" cy="23" r="4" fill="#d9730d" /><circle cx="26" cy="15" r="1.4" fill="#d9730d" /></>,
  <><path d="M14 1L27 14L14 27L1 14Z" fill="none" stroke="#8e3a9d" strokeWidth="1.7" strokeLinejoin="round" /><Ln d="M8 8L20 20M20 8L8 20" s="#8e3a9d" sw={1.7} /><path d="M14 8L20 14L14 20L8 14Z" fill="#f3f2f1" stroke="#8e3a9d" strokeWidth="1.4" /></>,
  <><Ln d="M1 4H15L27 14L17 25H3L12 14Z" s={B} sw={1.7} /><Ln d="M8 4L20 14M12 14H24" s="#5aa6dc" sw={1.4} /></>,
  <><circle cx="5" cy="14" r="1.5" fill="#333" /><circle cx="14" cy="14" r="1.5" fill="#333" /><circle cx="23" cy="14" r="1.5" fill="#333" /></>,
];

/* ---------- data ---------- */
const tabs = [
  { label: "File", w: 86 },
  { label: "Home", w: 114, active: true },
  { label: "Insert", w: 88 },
  { label: "Modeling", w: 150 },
  { label: "View", w: 76 },
  { label: "Optimize", w: 146 },
  { label: "Help", w: 76 },
  { label: "Format", w: 113, ml: 7, context: true },
  { label: "Data / Drill", w: 152, ml: 3, context: true },
];

const kpis = [
  { value: "175.29", label: "Estimated Hours Saved" },
  { value: "20.16K", label: "Estimated Savings" },
  { value: "126K", label: "Total Acceptances" },
  { value: "5577", label: "Sum of lead_time_hours", shift: 18 },
];

const bars = [
  ["dev_093", 297], ["dev_106", 297], ["dev_008", 291], ["dev_036", 289],
  ["dev_044", 283], ["dev_051", 283], ["dev_054", 283], ["dev_098", 283],
  ["dev_019", 280], ["dev_100", 280], ["dev_005", 277], ["dev_070", 273],
  ["dev_030", 271], ["dev_047", 271], ["dev_117", 271], ["dev_075", 269],
];

const handles = [
  [0, -1, 14, 4], [1, -1, 5, 14], [120, -2, 18, 5], [246, -1, 13, 4],
  [1, 98, 5, 18], [254, 98, 6, 18],
  [-1, 213, 15, 4], [1, 202, 5, 14], [120, 212, 18, 5], [246, 213, 15, 4], [255, 202, 5, 14],
];

const dataItems = [
  { w: 60, icon: <GetDataIcon />, lines: ["Get", "data"], caret: true },
  { w: 86, icon: <ExcelIcon />, lines: ["Excel", "workbook"] },
  { w: 78, icon: <OneLakeIcon />, lines: ["OneLake", "catalog"], caret: true },
  { w: 64, icon: <SqlIcon />, lines: ["SQL", "Server"] },
  { w: 56, icon: <EnterDataIcon />, lines: ["Enter", "data"] },
  { w: 88, icon: <DataverseIcon />, lines: ["Dataverse"] },
  { w: 74, icon: <RecentIcon />, lines: ["Recent", "sources"], caret: true },
];
const queryItems = [
  { w: 90, icon: <TransformIcon />, lines: ["Transform", "data"], caret: true },
  { w: 56, icon: <RefreshIcon />, lines: ["Refresh", ""], caret: true },
];
const insertItems = [
  { w: 56, icon: <NewVisualIcon />, lines: ["New", "visual"] },
  { w: 64, icon: <TextBoxIcon />, lines: ["Text", "box"] },
  { w: 72, icon: <MoreVisualsIcon />, lines: ["More", "visuals"], caret: true },
];
const calcItems = [
  { w: 104, icon: <VisualCalcIcon />, lines: ["New visual", "calculation"], caret: true },
  { w: 80, icon: <MeasureIcon />, lines: ["New", "measure"] },
  { w: 70, icon: <QuickIcon />, lines: ["Quick", "measure"] },
];

const RibbonItems = ({ items }) =>
  items.map((it) => (
    <Item key={it.lines.join()} $w={it.w}>
      {it.icon}
      {it.lines.map((line, i) => (
        <div key={i}>
          {line}
          {it.caret && i === it.lines.length - 1 && <Chev alone={!line} />}
        </div>
      ))}
    </Item>
  ));

export default function App() {
  return (
    <Frame>
      <GlobalStyle />
      <Tabs>
        {tabs.map((t) => (
          <Tab key={t.label} $w={t.w} $ml={t.ml} $active={t.active} $context={t.context}>
            {t.label}
          </Tab>
        ))}
      </Tabs>
      <Ribbon>
        <Group $w={233}>
          <GroupBody $pl={11}>
            <Item $w={48} $disabled>
              <PasteIcon />
              <div>Paste</div>
            </Item>
            <SmallCol>
              <SmallRow><CutIcon />Cut</SmallRow>
              <SmallRow><CopyIcon />Copy</SmallRow>
              <SmallRow><PainterIcon />Format painter</SmallRow>
            </SmallCol>
          </GroupBody>
          <GroupLabel $pr={5}>Clipboard</GroupLabel>
        </Group>
        <Group $w={537}>
          <GroupBody $pl={12}><RibbonItems items={dataItems} /></GroupBody>
          <GroupLabel>Data</GroupLabel>
        </Group>
        <Group $w={173}>
          <GroupBody $pl={9}><RibbonItems items={queryItems} /></GroupBody>
          <GroupLabel>Queries</GroupLabel>
        </Group>
        <Group $w={220}>
          <GroupBody $pl={14}><RibbonItems items={insertItems} /></GroupBody>
          <GroupLabel>Insert</GroupLabel>
        </Group>
        <Group $w={240} $last>
          <GroupBody $pl={12}><RibbonItems items={calcItems} /></GroupBody>
          <GroupLabel>Calculations</GroupLabel>
        </Group>
      </Ribbon>
      <Body>
        <Rail>
          <RailCell><ReportNavIcon /></RailCell>
          <RailCell><TableNavIcon /></RailCell>
          <RailCell><ModelNavIcon /></RailCell>
          <RailCell><DaxNavIcon /></RailCell>
          <RailCell><TmdlNavIcon /></RailCell>
        </Rail>
        <Canvas>
          <DottedRule />
          <Report>
            <KpiColumn>
              {kpis.map((k) => (
                <Kpi key={k.label} $shift={k.shift}>
                  <KpiValue>{k.value}</KpiValue>
                  <KpiLabel>{k.label}</KpiLabel>
                </Kpi>
              ))}
            </KpiColumn>
            <ChartColumn>
              <ChartTitle>Δ Throughput % by dev</ChartTitle>
              <ChartBody>
                <AxisTitle>dev</AxisTitle>
                <BarList>
                  {bars.map(([name, width]) => (
                    <BarRow key={name}>
                      <BarName>{name}</BarName>
                      <Bar style={{ width }} />
                    </BarRow>
                  ))}
                </BarList>
                <Scrollbar><ScrollThumb /></Scrollbar>
              </ChartBody>
              <AxisRow>
                {["0%", "10%", "20%", "30%"].map((t) => <AxisTick key={t}>{t}</AxisTick>)}
              </AxisRow>
              <SelectedCard>
                <FilterGlyph viewBox="0 0 26 24">
                  <path d="M1 1H25V3L16 13V22H10V13L1 3Z" fill="#fff" stroke="#777" strokeWidth="1.6" strokeLinejoin="round" />
                </FilterGlyph>
                <MoreDots><i /><i /><i /></MoreDots>
                <ToolbarMark $l={217} />
                <ToolbarMark $l={241} />
                {handles.map(([l, t, w, h]) => <Handle key={`${l}-${t}-${w}`} $l={l} $t={t} $w={w} $h={h} />)}
                <KpiValue>dev_082</KpiValue>
                <KpiLabel>Top Performer (Name)</KpiLabel>
                <Badge $l={248} $t={-26}>2</Badge>
              </SelectedCard>
            </ChartColumn>
          </Report>
        </Canvas>
        <FilterPane>
          <PaneChevron viewBox="0 0 22 22">
            <path d="M11 3L3 11L11 19M19 3L11 11L19 19" fill="none" stroke="#333" strokeWidth="1.5" />
          </PaneChevron>
          <FunnelSide viewBox="0 0 20 20">
            <path d="M18 2V18L10 11H3V9H10Z" fill="none" stroke="#333" strokeWidth="1.4" strokeLinejoin="round" />
          </FunnelSide>
          <FilterText>Filters</FilterText>
        </FilterPane>
        <VizPane>
          <VizHead>
            <VizTitle>Visualizations</VizTitle>
            <PaneChevron viewBox="0 0 22 22">
              <path d="M3 3L11 11L3 19M11 3L19 11L11 19" fill="none" stroke="#333" strokeWidth="1.5" />
            </PaneChevron>
          </VizHead>
          <BuildLabel>Build visual</BuildLabel>
          <BuildTabs>
            <BuildTab $active>
              <BuildSvg viewBox="0 0 40 40">
                <Ln d="M3 3H33" s="#333" sw={1.2} />
                <rect x={2} y={9} width={35} height={11} fill={GREEN} stroke="#222" strokeDasharray="2 1.5" />
                <rect x={2} y={25} width={35} height={11} fill={GREEN} stroke="#222" strokeDasharray="2 1.5" />
              </BuildSvg>
            </BuildTab>
            <BuildTab>
              <BuildSvg viewBox="0 0 40 40">
                <Ln d="M5 34V17H13V34M13 17V4H23V15M23 10H33V16" s="#444" sw={1.5} />
                <path d="M15 36C15 30 20 29 23 30C25 34 20 38 15 36Z" fill="#fff" stroke="#444" strokeWidth="1.5" />
                <path d="M23 29L34 14L36 16L26 32" fill="#fff" stroke="#444" strokeWidth="1.5" />
              </BuildSvg>
            </BuildTab>
            <BuildTab>
              <BuildSvg viewBox="0 0 40 40">
                <circle cx="18" cy="17" r="14" fill="none" stroke="#333" strokeWidth="1.6" />
                <Ln d="M29 28L37 36" s="#333" sw={3} />
                <Ln d="M5 18L12 12L18 17L26 8" s="#333" sw={1.5} />
                <Ln d="M9 21V27M14 21V30M19 21V30M24 21V27" s="#333" sw={1.4} />
              </BuildSvg>
            </BuildTab>
          </BuildTabs>
          <TabRule>
            <Notch viewBox="0 0 24 13">
              <path d="M0 12L12 1L24 12" fill="#f3f2f1" stroke="#8a8886" strokeWidth="1.2" />
            </Notch>
          </TabRule>
          <VisualGrid>
            {gallery.map((g, i) => (
              <VisualCell key={i} $selected={i === 23}>
                <VisualSvg viewBox="0 0 28 28">{g}</VisualSvg>
              </VisualCell>
            ))}
            <Badge $l={252} $t={59}>1</Badge>
          </VisualGrid>
          <PaneRule />
          <SectionLabel $mt={13}>Fields</SectionLabel>
          <FieldWell>
            <FieldPill>
              <FieldName>Top Performer (Name)</FieldName>
              <FieldChevron size={34} strokeWidth={0.8} color="#333" />
              <FieldRemove size={24} strokeWidth={1} color="#333" />
            </FieldPill>
            <Badge $l={189} $t={-32}>3</Badge>
          </FieldWell>
          <SectionLabel $mt={18} $bold>Drill through</SectionLabel>
          <ToggleRow $mt={15}>
            Cross-report
            <Toggle><i />Off</Toggle>
          </ToggleRow>
          <ToggleRow $mt={18}>
            Keep all filters
            <Toggle $on><i />On</Toggle>
          </ToggleRow>
          <DropBox>Add drill-through fields here</DropBox>
        </VizPane>
      </Body>
    </Frame>
  );
}
